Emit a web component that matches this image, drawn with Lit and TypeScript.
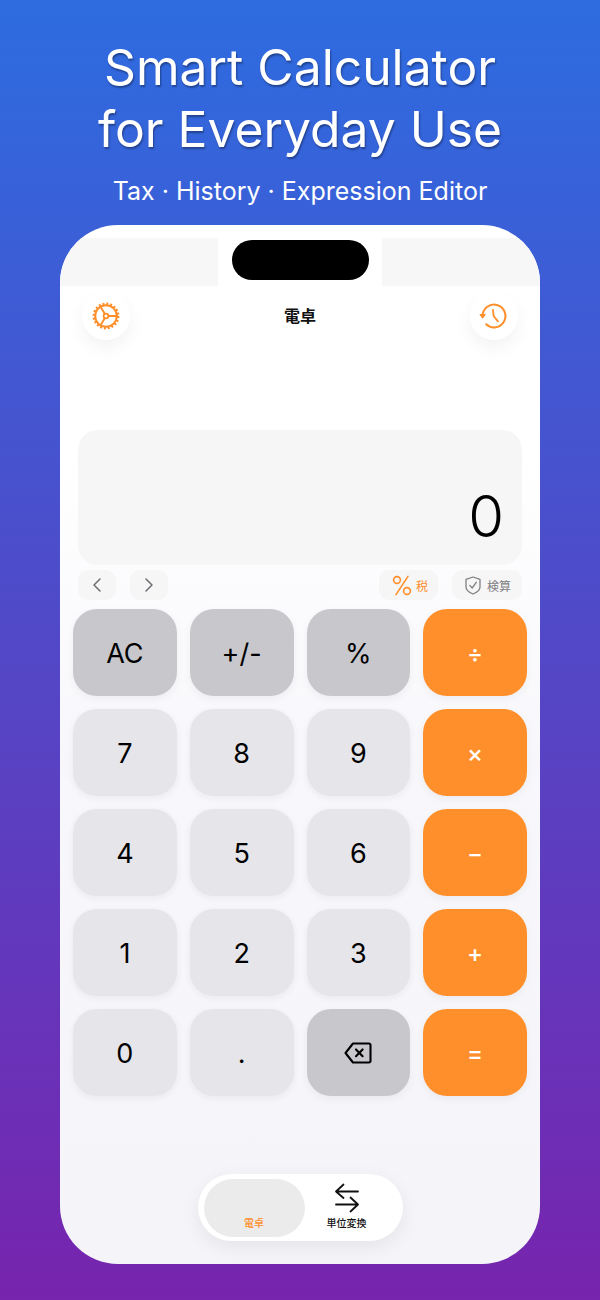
import { LitElement, html, css } from "lit";
import { customElement } from "lit/decorators.js";

const gear = html`<svg width="28" height="28" viewBox="0 0 28 28" fill="none" stroke="#ff8f2b">
  <circle cx="14" cy="14" r="10.8" stroke-width="2"/>
  <circle cx="14" cy="14" r="12.2" stroke-width="2.4" stroke-dasharray="2 1.83"/>
  <circle cx="14" cy="14" r="2.4" stroke-width="1.8"/>
  <path d="M16.4 14H25M12.8 11.9 8.5 4.5M12.8 16.1 8.5 23.5" stroke-width="1.9" stroke-linecap="round"/>
</svg>`;

const history = html`<svg width="30" height="28" viewBox="0 0 30 28" fill="none" stroke="#ff8f2b" stroke-width="2" stroke-linecap="round" stroke-linejoin="round">
  <path d="M3.6 14A11.4 11.4 0 1 1 7.2 22.3"/>
  <path d="M14 8 14.6 14 19 19.4" stroke-width="1.8"/>
  <path d="M1.2 12.6H6L3.6 15.8Z" fill="#ff8f2b" stroke-width="1.2"/>
</svg>`;

const percent = html`<svg width="20" height="21" viewBox="0 0 20 21" fill="none" stroke="#ff8f2b" stroke-width="1.6" stroke-linecap="round">
  <circle cx="5" cy="5" r="3.4"/><circle cx="15" cy="16" r="3.4"/><path d="M16 1.4 4 19.6"/>
</svg>`;

const shield = html`<svg width="16" height="19" viewBox="0 0 16 19" fill="none" stroke="#808084" stroke-width="1.3" stroke-linejoin="round" stroke-linecap="round">
  <path d="M8 1 15 3.4V11C15 14 12 16.4 8 18 4 16.4 1 14 1 11V3.4Z"/><path d="M4.8 9.4 7.2 12 11.4 6.2"/>
</svg>`;

const backspace = html`<svg width="28" height="22" viewBox="0 0 28 22" fill="none" stroke="#000" stroke-width="2.1" stroke-linejoin="round" stroke-linecap="round">
  <path d="M9 1.5H25A1.5 1.5 0 0 1 26.5 3V19A1.5 1.5 0 0 1 25 20.5H9L1.5 11Z"/><path d="M12 7.4 18.6 14.2M18.6 7.4 12 14.2"/>
</svg>`;

const swap = html`<svg width="26" height="30" viewBox="0 0 26 30" fill="none" stroke="#111" stroke-width="1.8" stroke-linecap="round" stroke-linejoin="round">
  <path d="M24 8.5H2M9.5 1.5 2 8.5 9.5 15"/><path d="M2 21.5H24M16.5 14.5 24 21.5 16.5 28.5"/>
</svg>`;

type Key = { t?: string; k: string; icon?: unknown };
const keys: Key[] = [
  { t: "AC", k: "fn" }, { t: "+/-", k: "fn" }, { t: "%", k: "fn" }, { t: "÷", k: "op" },
  { t: "7", k: "num" }, { t: "8", k: "num" }, { t: "9", k: "num" }, { t: "×", k: "op" },
  { t: "4", k: "num" }, { t: "5", k: "num" }, { t: "6", k: "num" }, { t: "−", k: "op" },
  { t: "1", k: "num" }, { t: "2", k: "num" }, { t: "3", k: "num" }, { t: "+", k: "op" },
  { t: "0", k: "num" }, { t: ".", k: "num" }, { k: "fn", icon: backspace }, { t: "=", k: "op" },
];

@customElement("app-root")
export class AppRoot extends LitElement {
  static styles = css`
    :host { display: block; width: 600px; height: 1300px; overflow: hidden;
      background: linear-gradient(180deg, #2d6ce0 0%, #7724ae 100%);
      font-family: Inter, "Noto Sans CJK JP", sans-serif; }
    .hero { height: 225px; box-sizing: border-box; padding-top: 36px; text-align: center; color: #fff; }
    h1 { margin: 0; font-size: 49.8px; line-height: 62px; font-weight: 400;
      text-shadow: 1px 2px 2px rgba(0,0,0,.35); }
    .sub { margin-top: 15px; font-size: 25px; line-height: 32px; font-weight: 400; }
    .phone { width: 480px; height: 1039px; margin: 0 auto; border-radius: 58px; overflow: hidden;
      background: linear-gradient(180deg, #ffffff 0%, #ffffff 22%, #f8f8fc 50%, #f4f4f9 100%);
      display: flex; flex-direction: column; }
    .status { display: flex; justify-content: space-between; margin-top: 13px; height: 48px; }
    .status div { width: 158px; background: #f7f7f7; }
    .status .pill { width: 137px; height: 40px; margin-top: 2px; border-radius: 20px; background: #000; }
    .top { display: flex; justify-content: space-between; align-items: center; padding: 6px 22px 0; height: 48px; }
    .round { width: 48px; height: 48px; border-radius: 50%; background: #fff; display: flex;
      align-items: center; justify-content: center; box-shadow: 0 8px 18px rgba(0,0,0,.05); }
    .title { font-size: 16px; font-weight: 700; color: #111; margin-top: -2px; }
    .display { margin: 90px 18px 0; height: 135px; border-radius: 20px; background: #f6f6f6;
      display: flex; justify-content: flex-end; align-items: flex-end; padding: 0 18px 14px 0; box-sizing: border-box; }
    .display span { font-size: 58px; line-height: 70px; font-weight: 300; color: #000; }
    .tools { display: flex; gap: 14px; margin: 5px 18px 0; height: 30px; }
    .tool { background: #f6f6f6; border-radius: 10px; display: flex; align-items: center; justify-content: center; gap: 7px; box-sizing: border-box; }
    .nav { width: 38px; }
    .spacer { flex: 1; }
    .tax { width: 59px; color: #ff8f2b; font-size: 12px; gap: 4px; padding-left: 3px; }
    .check { width: 70px; color: #808084; font-size: 12px; gap: 6px; padding-left: 2px; }
    .grid { display: grid; grid-template-columns: repeat(4, 103.75px); grid-auto-rows: 87px; column-gap: 13px; row-gap: 13px;
      margin: 9px 13px 0; }
    .key { border-radius: 24px; display: flex; align-items: center; justify-content: center; padding-top: 1px; box-sizing: border-box;
      font-size: 27px; color: #000; box-shadow: 0 3px 8px rgba(0,0,0,.05); }
    .fn { background: #c7c7cc; }
    .num { background: #e5e5ea; box-shadow: 0 2px 5px 2px rgba(0,0,0,.035); }
    .op { background: #ff8f2b; color: #fff; font-size: 24px; font-weight: 500; }
    .tabbar { align-self: center; margin-top: 78px; width: 205px; height: 67px; border-radius: 34px; background: #fff;
      box-shadow: 0 6px 20px rgba(0,0,0,.07); display: flex; padding: 5px 0 4px 6px; box-sizing: border-box; }
    .tab { height: 58px; border-radius: 29px; display: flex; flex-direction: column; align-items: center; flex: none;
      justify-content: flex-end; font-size: 10px; font-weight: 500; color: #111; padding-bottom: 7px; box-sizing: border-box; }
    .tab.on { width: 101px; background: #ebebeb; color: #ff8f2b; }
    .tab.alt { width: 82px; margin-left: 1px; }
    .tab svg { margin-bottom: 2px; margin-top: -4px; }
  `;

  render() {
    return html`
      <div class="hero">
        <h1>Smart Calculator<br />for Everyday Use</h1>
        <div class="sub">Tax · History · Expression Editor</div>
      </div>
      <div class="phone">
        <div class="status"><div></div><div class="pill"></div><div></div></div>
        <div class="top">
          <div class="round">${gear}</div>
          <div class="title">電卓</div>
          <div class="round">${history}</div>
        </div>
        <div class="display"><span>0</span></div>
        <div class="tools">
          <div class="tool nav"><svg width="10" height="16" viewBox="0 0 10 16" fill="none" stroke="#6e6e72" stroke-width="1.5" stroke-linecap="round" stroke-linejoin="round"><path d="M8 2 2 8 8 14"/></svg></div>
          <div class="tool nav"><svg width="10" height="16" viewBox="0 0 10 16" fill="none" stroke="#6e6e72" stroke-width="1.5" stroke-linecap="round" stroke-linejoin="round"><path d="M2 2 8 8 2 14"/></svg></div>
          <div class="spacer"></div>
          <div class="tool tax">${percent}<span>税</span></div>
          <div class="tool check">${shield}<span>検算</span></div>
        </div>
        <div class="grid">
          ${keys.map((k) => html`<div class="key ${k.k}">${k.icon ?? k.t}</div>`)}
        </div>
        <div class="tabbar">
          <div class="tab on">電卓</div>
          <div class="tab alt">${swap}単位変換</div>
        </div>
      </div>`;
  }
}
